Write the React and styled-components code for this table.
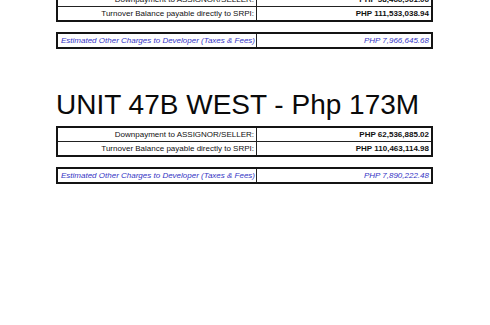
import React from 'react';
import styled, { createGlobalStyle } from 'styled-components';

const GlobalStyle = createGlobalStyle`
  html, body {
    margin: 0;
    padding: 0;
    background: #ffffff;
  }
  body {
    font-family: 'Liberation Sans', Arial, sans-serif;
    color: #000;
  }
`;

const Page = styled.div`
  margin-top: -9px;
  padding-left: 56px;
  width: 377px;
`;

const Section = styled.section`
  display: flex;
  flex-direction: column;
  gap: 10px;
  margin-bottom: 40px;
`;

const Title = styled.h1`
  font-family: 'Liberation Sans', Arial, sans-serif;
  font-size: 28px;
  font-weight: 400;
  line-height: 32px;
  margin: 0 0 -5px;
  color: #0a0a0a;
  white-space: nowrap;
`;

const Table = styled.div`
  border: 2px solid #141414;
  display: grid;
  grid-template-columns: 199px 1fr;
`;

const Cell = styled.div`
  height: 13px;
  font-size: 8px;
  line-height: 13px;
  white-space: nowrap;
  overflow: hidden;
  text-align: ${p => (p.align === 'left' ? 'left' : 'right')};
  padding: ${p => (p.align === 'left' ? '0 2px 0 3px' : '0 2px')};
  font-weight: ${p => (p.bold ? 700 : 400)};
  font-style: ${p => (p.blue ? 'italic' : 'normal')};
  color: ${p => (p.blue ? '#3434c4' : '#111')};
  border-top: ${p => (p.first ? 'none' : '1px solid #222')};
  border-right: ${p => (p.label ? '1px solid #222' : 'none')};
`;

const sections = [
  {
    rows: [
      ['Downpayment to ASSIGNOR/SELLER:', 'PHP 58,466,961.06'],
      ['Turnover Balance payable directly to SRPI:', 'PHP 111,533,038.94'],
    ],
    charges: 'PHP 7,966,645.68',
  },
  {
    title: 'UNIT 47B WEST - Php 173M',
    rows: [
      ['Downpayment to ASSIGNOR/SELLER:', 'PHP 62,536,885.02'],
      ['Turnover Balance payable directly to SRPI:', 'PHP 110,463,114.98'],
    ],
    charges: 'PHP 7,890,222.48',
  },
];

const App = () => (
  <>
    <GlobalStyle />
    <Page>
      {sections.map((s, i) => (
        <Section key={i}>
          {s.title && <Title>{s.title}</Title>}
          <Table>
            {s.rows.map(([label, value], r) => (
              <React.Fragment key={label}>
                <Cell label first={r === 0}>{label}</Cell>
                <Cell bold first={r === 0}>{value}</Cell>
              </React.Fragment>
            ))}
          </Table>
          <Table>
            <Cell label first blue align="left">
              Estimated Other Charges to Developer (Taxes &amp; Fees)
            </Cell>
            <Cell first blue>{s.charges}</Cell>
          </Table>
        </Section>
      ))}
    </Page>
  </>
);

export default App;
